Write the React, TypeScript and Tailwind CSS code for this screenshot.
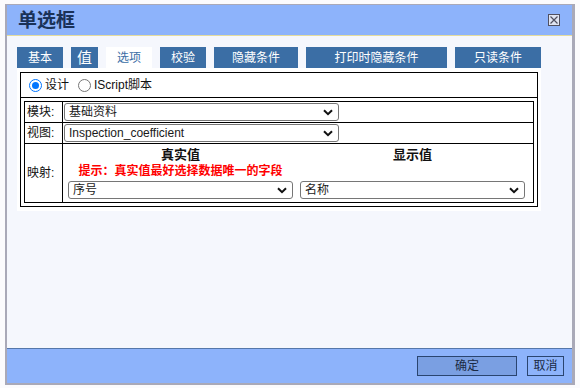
const tabs = [
  { label: "基本", w: "w-[46px]" },
  { label: "值", w: "w-[27px]", big: true },
  { label: "选项", w: "w-[46px]", active: true },
  { label: "校验", w: "w-[46px]" },
  { label: "隐藏条件", w: "w-[84px]" },
  { label: "打印时隐藏条件", w: "w-[141px]" },
  { label: "只读条件", w: "w-[86px]" },
];

function Chevron() {
  return (
    <svg width="10" height="7" viewBox="0 0 10 7" className="shrink-0">
      <path d="M1 1.2 L5 5.2 L9 1.2" fill="none" stroke="#111" strokeWidth="2" />
    </svg>
  );
}

function FakeSelect({ value, className }: { value: string; className: string }) {
  return (
    <div
      className={`h-[18px] flex items-center justify-between pl-[4px] pr-[5px] bg-white border border-[#767676] rounded-[3px] text-[12px] text-[#1a1a1a] ${className}`}
    >
      <span className="leading-none">{value}</span>
      <Chevron />
    </div>
  );
}

function Radio({ checked }: { checked?: boolean }) {
  return checked ? (
    <span className="w-[13px] h-[13px] shrink-0 rounded-full border-[1.5px] border-[#0075ff] flex items-center justify-center bg-white">
      <span className="block w-[7px] h-[7px] rounded-full bg-[#0075ff]" />
    </span>
  ) : (
    <span className="block w-[13px] h-[13px] shrink-0 rounded-full border border-[#767676] bg-white" />
  );
}

export default function App() {
  return (
    <div className="w-[580px] h-[388px] bg-[#fbfbfd] pt-[4px] pl-[5px] overflow-hidden font-['Liberation_Sans','Noto_Sans_CJK_SC',sans-serif]">
      <div className="w-[570px] h-[381px] flex flex-col border-l-2 border-t border-r-[3px] border-b-2 border-[#a9a9b8]">
        {/* title bar */}
        <div className="h-[31px] shrink-0 bg-[#8db3fb] border-b border-[#e4dc9e] flex items-center justify-between pl-[11px] pr-[12px]">
          <span className="text-[19px] font-bold text-[#1a3258] leading-none">单选框</span>
          <span className="w-[12px] h-[12px] border border-[#505060] bg-[#dfe4f2] flex items-center justify-center">
            <svg width="8" height="8" viewBox="0 0 8 8">
              <path d="M0.5 0.5 L7.5 7.5 M7.5 0.5 L0.5 7.5" stroke="#505060" strokeWidth="1.2" />
            </svg>
          </span>
        </div>

        {/* body */}
        <div className="flex-1 bg-[#f5f7fd] pt-[11px] pl-[10px]">
          <div className="flex gap-[8px] h-[21px]">
            {tabs.map((t) => (
              <div
                key={t.label}
                className={`${t.w} h-full flex items-center justify-center leading-none ${
                  t.big ? "text-[15px]" : "text-[12px]"
                } ${t.active ? "bg-white text-[#3b6ea5]" : "bg-[#3b6ea5] text-white"}`}
              >
                {t.label}
              </div>
            ))}
          </div>

          <div className="w-[524px] bg-white px-[3px] pt-[4px] pb-[4px]">
            <div className="w-[518px] border border-black">
              <div className="h-[25px] border-b border-black flex items-center pl-[8px] text-[12px] text-[#111]">
                <Radio checked />
                <span className="ml-[3px]">设计</span>
                <span className="ml-[9px]">
                  <Radio />
                </span>
                <span className="ml-[3px]">IScript脚本</span>
              </div>

              <div className="p-[3px]">
                <div className="border border-black text-[12px] text-[#111]">
                  <div className="flex h-[21px] border-b border-black">
                    <div className="w-[38px] border-r border-black pl-[2px] flex items-center">模块:</div>
                    <div className="flex-1 flex items-center pl-[1px]">
                      <FakeSelect value="基础资料" className="w-[275px]" />
                    </div>
                  </div>
                  <div className="flex h-[21px] border-b border-black">
                    <div className="w-[38px] border-r border-black pl-[2px] flex items-center">视图:</div>
                    <div className="flex-1 flex items-center pl-[1px]">
                      <FakeSelect value="Inspection_coefficient" className="w-[275px]" />
                    </div>
                  </div>
                  <div className="flex h-[58px]">
                    <div className="w-[38px] border-r border-black pl-[2px] flex items-center">映射:</div>
                    <div className="flex-1 flex gap-[7px] pl-[5px] pr-[8px] pt-[3px]">
                      <div className="flex-1 flex flex-col items-center">
                        <span className="font-bold text-[13px] leading-[16px]">真实值</span>
                        <span className="font-bold text-[12px] text-[#ff0000] leading-[17px]">
                          提示：真实值最好选择数据唯一的字段
                        </span>
                        <FakeSelect value="序号" className="w-full mt-[1px]" />
                      </div>
                      <div className="flex-1 flex flex-col items-center">
                        <span className="font-bold text-[13px] leading-[16px]">显示值</span>
                        <span className="h-[17px]" />
                        <FakeSelect value="名称" className="w-full mt-[1px]" />
                      </div>
                    </div>
                  </div>
                </div>
              </div>
            </div>
          </div>
        </div>

        {/* footer */}
        <div className="h-[35px] shrink-0 bg-[#8db3fb] border-t border-[#5577aa] flex items-center justify-end gap-[10px] pr-[8px] text-[12px] text-[#1b2a44]">
          <div className="w-[100px] h-[20px] bg-[#7a9fe2] border border-[#2a4570] flex items-center justify-center">确定</div>
          <div className="w-[37px] h-[20px] bg-[#8db3fb] border border-[#2a4570] flex items-center justify-center">取消</div>
        </div>
      </div>
    </div>
  );
}
